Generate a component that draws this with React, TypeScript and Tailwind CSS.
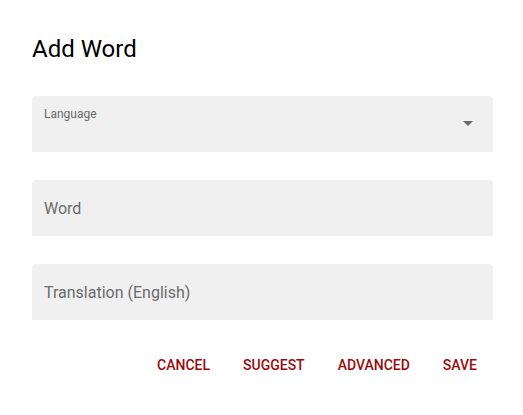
import React from 'react';

const font = { fontFamily: 'Roboto, "Liberation Sans", sans-serif' };

function Field({ label }: { label: string }) {
  return (
    <div className="h-14 w-[461px] rounded-t bg-[#f0f0f0] px-3 flex items-center">
      <span className="text-base text-[#6b6b6b] pt-px">{label}</span>
    </div>
  );
}

export default function App() {
  return (
    <div className="w-[523px] h-[415px] bg-white overflow-hidden" style={font}>
      <div className="pl-8 pt-[33px]">
        <h2 className="text-2xl text-black leading-8 font-normal">Add Word</h2>

        <div className="mt-[31px] flex flex-col gap-7">
          {/* Language select */}
          <div className="relative h-14 w-[461px] rounded-t bg-[#f0f0f0] px-3">
            <span className="absolute left-3 top-[10px] text-xs text-[#6b6b6b]">Language</span>
            <svg className="absolute right-[20px] top-[25px]" width="10" height="5" viewBox="0 0 10 5">
              <path d="M0 0 L10 0 L5 5 Z" fill="#6b6b6b" />
            </svg>
          </div>

          <Field label="Word" />
          <Field label="Translation (English)" />
        </div>

        <div className="mt-[27px] w-[461px] flex justify-end gap-px">
          {['Cancel', 'Suggest', 'Advanced', 'Save'].map((b) => (
            <button
              key={b}
              className="px-4 h-9 text-sm font-medium uppercase text-[#9b0a0a]"
            >
              {b}
            </button>
          ))}
        </div>
      </div>
    </div>
  );
}
